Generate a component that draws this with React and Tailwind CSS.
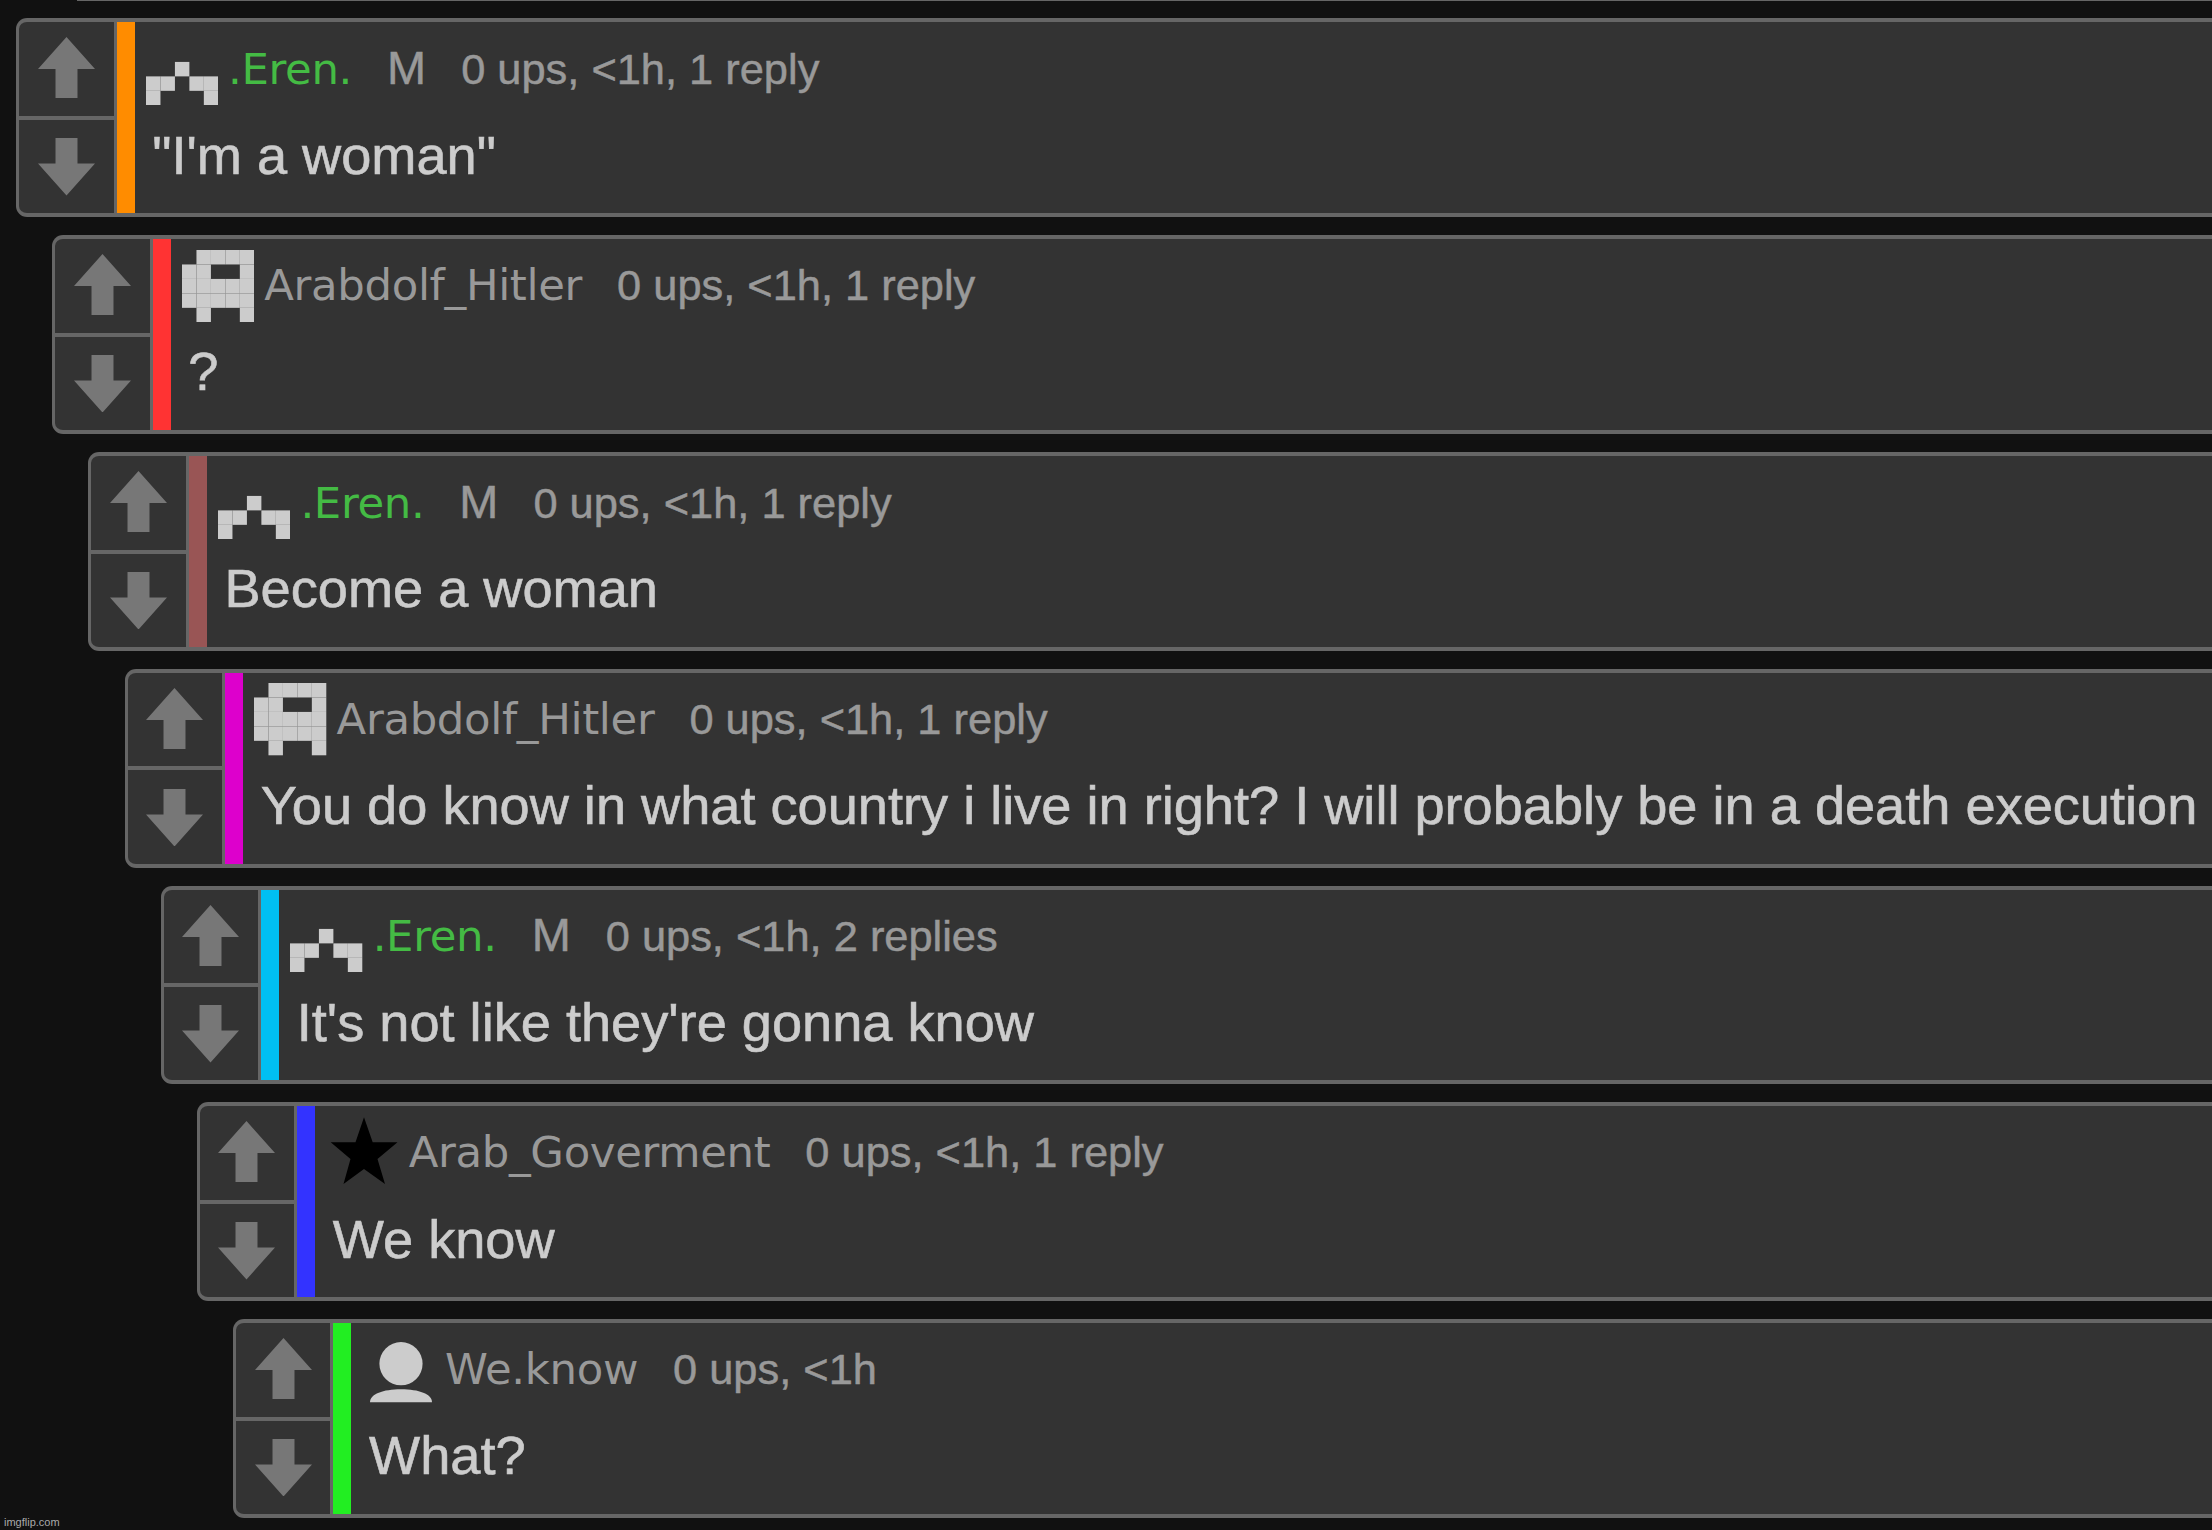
import React from "react";

const comments = [
  {
    user: ".Eren.",
    avatar: "arch",
    mod: true,
    meta: "0 ups, <1h, 1 reply",
    text: "\"I'm a woman\"",
    indent: "ml-[16px]",
    bar: "bg-[#ff8c00]",
  },
  {
    user: "Arabdolf_Hitler",
    avatar: "helmet",
    meta: "0 ups, <1h, 1 reply",
    text: "?",
    indent: "ml-[52.2px]",
    bar: "bg-[#ff3333]",
  },
  {
    user: ".Eren.",
    avatar: "arch",
    mod: true,
    meta: "0 ups, <1h, 1 reply",
    text: "Become a woman",
    indent: "ml-[88.3px]",
    bar: "bg-[#995555]",
  },
  {
    user: "Arabdolf_Hitler",
    avatar: "helmet",
    meta: "0 ups, <1h, 1 reply",
    text: "You do know in what country i live in right? I will probably be in a death execution",
    indent: "ml-[124.5px]",
    bar: "bg-[#dd00cc]",
  },
  {
    user: ".Eren.",
    avatar: "arch",
    mod: true,
    meta: "0 ups, <1h, 2 replies",
    text: "It's not like they're gonna know",
    indent: "ml-[160.6px]",
    bar: "bg-[#00bff3]",
  },
  {
    user: "Arab_Goverment",
    avatar: "star",
    meta: "0 ups, <1h, 1 reply",
    text: "We know",
    indent: "ml-[196.7px]",
    bar: "bg-[#3333ff]",
  },
  {
    user: "We.know",
    avatar: "person",
    meta: "0 ups, <1h",
    text: "What?",
    indent: "ml-[232.9px]",
    bar: "bg-[#22ee22]",
  },
];

// 5x5 pixel avatars, one string per row
const pixels = {
  arch: [".....", ".....", "..#..", "##.##", "#...#"],
  helmet: [".####", "##..#", "#####", "#####", ".#..#"],
};

const Avatar = ({ type }) => (
  <svg viewBox="0 0 72.3 72.3" className="w-[72.3px] h-[72.3px] shrink-0 fill-[#cccccc]">
    {pixels[type] &&
      pixels[type].map((row, y) =>
        row.split("").map((c, x) =>
          c === "#" ? (
            <rect key={`${x}-${y}`} x={x * 14.46} y={y * 14.46} width="14.46" height="14.46" />
          ) : null
        )
      )}
    {type === "star" && (
      <path
        fill="#000"
        d="M38 0.3L46.7 25.3H71.5L51.5 42L59 67L38 52L17.5 67L24.5 42L4.7 25.3H29.5Z"
      />
    )}
    {type === "person" && (
      <>
        <circle cx="38" cy="29.7" r="21.6" />
        <path d="M7 68.2C7 60 20 55.2 38 55.2S69 60 69 68.2Z" />
      </>
    )}
  </svg>
);

const Votes = () => (
  <div className="w-[97.6px] shrink-0 flex flex-col border-r-[3.6px] border-[#666666]">
    <button className="h-[97.6px] flex justify-center items-start pt-[15px] border-b-[4px] border-[#666666]">
      <svg viewBox="0 0 57 61" className="w-[57px] h-[61px] fill-[#777777]">
        <path d="M28.5 0L57 32H39.5V61H17.5V32H0Z" />
      </svg>
    </button>
    <button className="flex-1 flex justify-center items-start pt-[18.2px]">
      <svg viewBox="0 0 57 57.5" className="w-[57px] h-[57.5px] fill-[#777777]">
        <path d="M17.5 0H39.5V25.5H57L28.5 57.5L0 25.5H17.5Z" />
      </svg>
    </button>
  </div>
);

const Comment = ({ user, avatar, mod, meta, text, indent, bar }) => (
  <div
    className={`${indent} h-[198.8px] flex bg-[#333333] border-y-[4px] border-l-[3.6px] border-[#666666] rounded-l-[11px]`}
  >
    <Votes />
    <div className={`w-[18px] shrink-0 ${bar}`} />
    <div className="pl-[11.2px] pt-[10.6px] whitespace-nowrap">
      <div className="flex h-[72.3px]">
        <Avatar type={avatar} />
        <div className="flex items-baseline ml-[10px] mt-[10.2px] h-[50px] leading-[50px] text-[43.4px] text-[#999999]">
          <span className={`font-['DejaVu_Sans'] tracking-[-0.35px] ${mod ? "text-[#44bb44]" : ""}`}>
            {user}
          </span>
          {mod && <span className="ml-[35px] text-[46.9px] [-webkit-text-stroke:0.5px]">M</span>}
          <span className="ml-[35px] [-webkit-text-stroke:0.5px]">{meta}</span>
        </div>
      </div>
      <p className="mt-[18.3px] pl-[6.4px] text-[54.2px] leading-[62px] tracking-[-0.015px] text-[#cccccc] [-webkit-text-stroke:0.6px]">
        {text}
      </p>
    </div>
  </div>
);

const App = () => (
  <div className="w-[2212px] h-[1530px] overflow-hidden bg-[#111111] font-['Liberation_Sans',sans-serif] flex flex-col">
    {/* bottom edge of the comment above */}
    <div className="ml-[77px] h-px bg-[#666666] shrink-0" />
    <div className="mt-[17.4px] flex flex-col gap-[18px]">
      {comments.map((c, i) => (
        <Comment key={i} {...c} />
      ))}
    </div>
    <div className="pl-[4px] -mt-[3px] text-[11px] leading-[14px] text-[#aaaaaa]">imgflip.com</div>
  </div>
);

export default App;
